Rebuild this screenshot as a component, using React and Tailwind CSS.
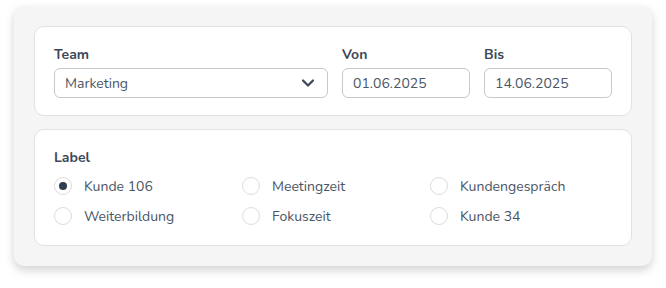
import React from "react";

const font = { fontFamily: "Nunito, 'Nunito Sans', Lato, 'Noto Sans', sans-serif" };

function Radio({ checked, label }) {
  return (
    <label className="flex h-[30px] items-center gap-[12px]">
      <span className="flex h-[18px] w-[18px] items-center justify-center rounded-full border border-[#dcdcdc] bg-white">
        {checked && <span className="h-[8px] w-[8px] rounded-full bg-[#2f3e50]" />}
      </span>
      <span className="text-[14px] text-[#4a5565]">{label}</span>
    </label>
  );
}

function Field({ label, children }) {
  return (
    <div className="flex flex-col">
      <div className="h-[18px] text-[14px] font-bold leading-[18px] text-[#3c4858]">{label}</div>
      <div className="mt-[4px]">{children}</div>
    </div>
  );
}

export default function App() {
  const items = [
    ["Kunde 106", true],
    ["Meetingzeit", false],
    ["Kundengespräch", false],
    ["Weiterbildung", false],
    ["Fokuszeit", false],
    ["Kunde 34", false],
  ];
  return (
    <div className="h-[288px] w-[666px] bg-white pl-[14px] pt-[6px]" style={font}>
      <div className="flex h-[260px] w-[638px] flex-col gap-[13px] rounded-[10px] bg-[#f5f5f5] p-[20px] shadow-[0_4px_10px_rgba(0,0,0,0.18)]">
        <div className="h-[90px] rounded-[10px] border border-[#e2e2e2] bg-white px-[19px] pt-[19px]">
          <div className="grid grid-cols-[1fr_128px_128px] gap-[14px]">
            <Field label="Team">
              <div className="flex h-[30px] items-center justify-between rounded-[6px] border border-[#c8c8c8] pl-[10px] pr-[12px] text-[14px] text-[#4a5565]">
                <span>Marketing</span>
                <svg width="14" height="14" viewBox="0 0 14 14" fill="none" stroke="#3c4858" strokeWidth="2.2" strokeLinecap="round" strokeLinejoin="round">
                  <path d="M2 4.5 7 9.5l5-5" />
                </svg>
              </div>
            </Field>
            <Field label="Von">
              <div className="flex h-[30px] items-center rounded-[6px] border border-[#c8c8c8] px-[10px] text-[14px] text-[#4a5565]">01.06.2025</div>
            </Field>
            <Field label="Bis">
              <div className="flex h-[30px] items-center rounded-[6px] border border-[#c8c8c8] px-[10px] text-[14px] text-[#4a5565]">14.06.2025</div>
            </Field>
          </div>
        </div>
        <div className="h-[117px] rounded-[10px] border border-[#e2e2e2] bg-white px-[19px] pt-[19px]">
          <div className="h-[18px] text-[14px] font-bold leading-[18px] text-[#3c4858]">Label</div>
          <div className="mt-[4px] grid grid-cols-3 gap-x-[6px]">
            {items.map(([l, c]) => (
              <Radio key={l} label={l} checked={c} />
            ))}
          </div>
        </div>
      </div>
    </div>
  );
}
